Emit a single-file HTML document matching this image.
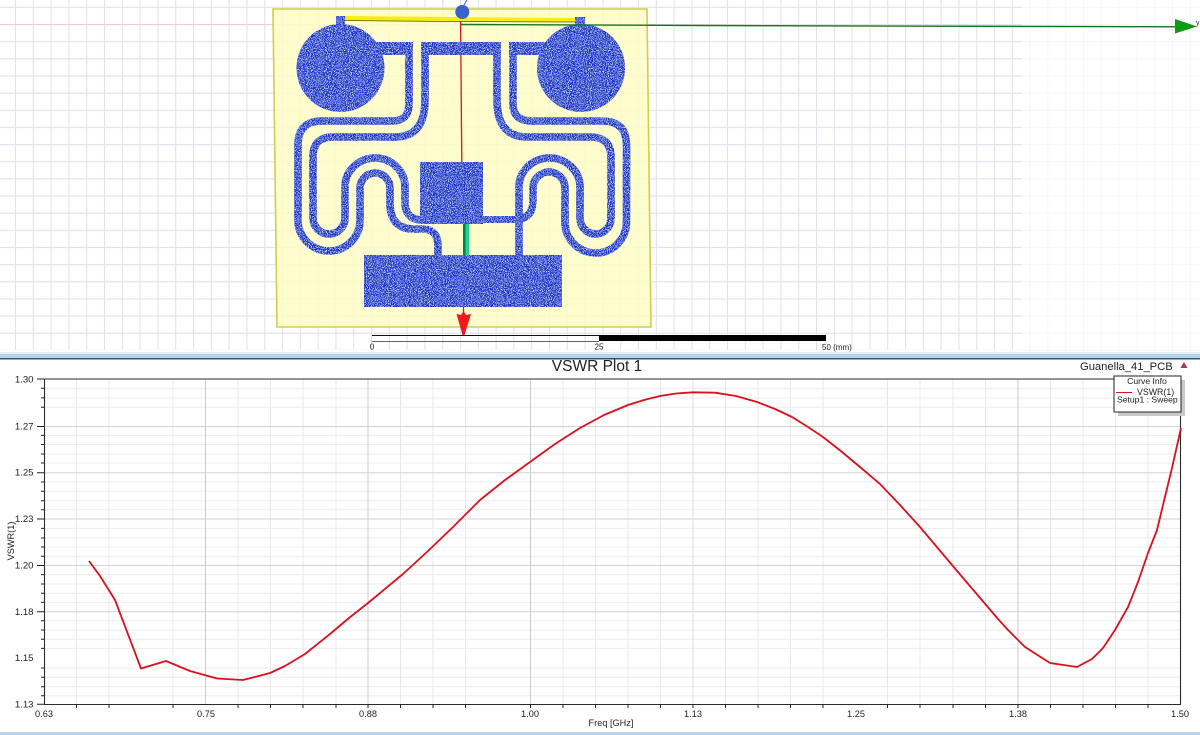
<!DOCTYPE html>
<html>
<head>
<meta charset="utf-8">
<title>VSWR Plot 1</title>
<style>
html,body{margin:0;padding:0;background:#fff;width:1200px;height:735px;overflow:hidden}
svg{display:block}
text{font-family:"Liberation Sans",sans-serif;fill:#222}
</style>
</head>
<body>
<svg width="1200" height="735" viewBox="0 0 1200 735" xmlns="http://www.w3.org/2000/svg">
<defs>
<pattern id="grid" patternUnits="userSpaceOnUse" x="15" y="6.85" width="17.8" height="17.15">
<path d="M0.5 0V17.15M0 0.5H17.8" stroke="#e1e1eb" stroke-width="1.1" fill="none"/>
</pattern>
<pattern id="gridf" patternUnits="userSpaceOnUse" x="15" y="6.85" width="17.8" height="17.15">
<path d="M0.5 0V17.15M0 0.5H17.8" stroke="#f7f7fa" stroke-width="1" fill="none"/>
</pattern>
<filter id="mesh" x="0" y="0" width="100%" height="100%" filterUnits="userSpaceOnUse" primitiveUnits="userSpaceOnUse">
<feTurbulence type="fractalNoise" baseFrequency="1.05" numOctaves="2" seed="4" result="n"/>
<feColorMatrix in="n" type="matrix" values="0 0 0 0 0.55  0 0 0 0 0.68  0 0 0 0 0.93  9 0 0 0 -4.6" result="s"/>
<feComposite in="s" in2="SourceGraphic" operator="in" result="sp"/>
<feMerge><feMergeNode in="SourceGraphic"/><feMergeNode in="sp"/></feMerge>
</filter>
</defs>

<!-- 3D view background grid -->
<rect x="0" y="0" width="1200" height="352" fill="#fff"/>
<rect x="1022" y="0" width="178" height="352" fill="url(#gridf)"/>
<rect x="0" y="0" width="1022" height="350" fill="url(#grid)"/>
<path d="M0 24.5H273" stroke="#f2ccd4" stroke-width="1"/>

<!-- board -->
<polygon points="273,9 647,9 651,327 277,327" fill="#fdfdc6" fill-opacity="0.85" stroke="#cfcf4a" stroke-width="1.6"/>

<!-- red axis -->
<path d="M460.5 14L461.8 162" stroke="#e01818" stroke-width="1.3" fill="none"/>
<path d="M463.5 307V316" stroke="#e01818" stroke-width="1.3" fill="none"/>

<!-- yellow bar -->
<polygon points="345,16 450,17 575,18 575,22 450,21.5 345,20.5" fill="#f6ee10"/>
<path d="M345 20.5L450 21.5L575 22" stroke="#555510" stroke-width="0.8" fill="none"/>

<!-- feed strip -->
<rect x="463" y="224" width="2.5" height="31" fill="#0d7d45"/>
<rect x="465.5" y="224" width="3.5" height="31" fill="#20d48e"/>

<!-- mesh metal -->
<g filter="url(#mesh)" fill="#1f33c8" stroke="none">
<circle cx="340.5" cy="68" r="44"/>
<circle cx="581" cy="68" r="44"/>
<rect x="336" y="16" width="9" height="12"/>
<rect x="575" y="17" width="10" height="11"/>
<rect x="373" y="42" width="40" height="13"/>
<rect x="509" y="42" width="41" height="13"/>
<rect x="421" y="42" width="80" height="13"/>
<rect x="420" y="162" width="63" height="62"/>
<rect x="364" y="255" width="198" height="52"/>
<rect x="483" y="216" width="37" height="7"/>
<g fill="none" stroke="#1f33c8" stroke-width="7.6">
<path d="M409 50V104Q409 121 392 121H322Q298 121 298 145V220A31 31 0 0 0 360 220V188A15 15 0 0 1 390 188V205Q391 228 412 229H424Q438 230 438 246V256"/>
<path d="M425 50V100Q425 137 395 137H333Q313 137 313 157V218A16 16 0 0 0 345 218V187A30 29 0 0 1 405 187V205Q407 220 422 220"/>
<path d="M513 50V104Q513 121 532 121H602Q626.5 121 626.5 145V222A30.75 31 0 0 1 565 222V188A15.5 15.5 0 0 0 533 188V200Q533 218 518 219"/>
<path d="M497 50V100Q497 137 527 137H590Q611 137 611 157V218A15.5 16 0 0 1 580 218V187A30.5 29 0 0 0 519 187V256"/>
</g>
</g>

<!-- axes triad -->
<path d="M461 24.5L700 25.5L1176 26.8" stroke="#14751c" stroke-width="1.4" fill="none"/>
<polygon points="1175,19 1197,26.5 1175,33.5" fill="#0f9a14"/>
<text x="1196" y="25" font-size="7" fill="#333">y</text>
<path d="M464 5L467 0" stroke="#3b62cc" stroke-width="1"/>
<circle cx="462.3" cy="12" r="7" fill="#3a62cc"/>
<polygon points="456.5,314 461,315 463.5,311 466,315 471,314 464.5,335 462.5,335" fill="#f01818"/>

<!-- scale bar -->
<rect x="372" y="335" width="227" height="1" fill="#111"/>
<rect x="372" y="341" width="227" height="1" fill="#666"/>
<rect x="599" y="335" width="227" height="6" fill="#000"/>
<text x="372" y="349.5" font-size="8" text-anchor="middle">0</text>
<text x="599" y="349.5" font-size="8" text-anchor="middle">25</text>
<text x="822" y="350" font-size="8">50 (mm)</text>

<!-- separator -->
<rect x="0" y="352" width="1200" height="2" fill="#e6edf5"/>
<rect x="0" y="354" width="1200" height="4" fill="#b4d3ec"/>
<rect x="0" y="358" width="1200" height="1.5" fill="#2c5a60"/>
<rect x="0" y="359.5" width="1200" height="372.5" fill="#fff"/>
<rect x="0" y="732" width="1200" height="3" fill="#b9d1ec"/>

<!-- plot gridlines minor -->
<path d="M44 388.3H1181M44 397.9H1181M44 407.2H1181M44 435.4H1181M44 444.5H1181M44 454H1181M44 463H1181M44 482H1181M44 491.2H1181M44 500.7H1181M44 509.8H1181M44 528.4H1181M44 538H1181M44 547H1181M44 556.3H1181M44 574.6H1181M44 584H1181M44 593.2H1181M44 602.4H1181M44 620.8H1181M44 630H1181M44 639.2H1181M44 648.4H1181M44 668H1181M44 677.3H1181M44 686.7H1181M44 695.8H1181" stroke="#ececf0" stroke-width="1" fill="none"/>
<path d="M76.5 379V704M109 379V704M173 379V704M238 379V704M270.5 379V704M303 379V704M336 379V704M400.5 379V704M433 379V704M465.5 379V704M563 379V704M595.5 379V704M628 379V704M660.5 379V704M725.5 379V704M758 379V704M790.5 379V704M823 379V704M887.5 379V704M920 379V704M953 379V704M985.5 379V704M1050.5 379V704M1083 379V704M1115.5 379V704M1148 379V704" stroke="#e9e9ed" stroke-width="1" fill="none"/>
<!-- plot gridlines major -->
<path d="M44 426.5H1181M44 472.7H1181M44 519H1181M44 565.5H1181M44 611.7H1181" stroke="#d2d2d5" stroke-width="1" fill="none"/>
<path d="M205.5 379V704M368 379V704M530.5 379V704M1018 379V704" stroke="#cbcbce" stroke-width="1" fill="none"/>
<path d="M693 379V704" stroke="#dcdce0" stroke-width="1" fill="none"/>

<!-- axes -->
<path d="M44.5 379H1181M44.5 379V704.5M44 704.5H1181M1180.5 379V704.5" stroke="#2a2a2a" stroke-width="1.1" fill="none"/>
<!-- y ticks -->
<path d="M37 379H44M37 426.5H44M37 472.7H44M37 519H44M37 565.5H44M37 611.7H44M37 704.3H44" stroke="#222" stroke-width="1" fill="none"/>
<path d="M41 388.3H44M41 397.9H44M41 407.2H44M41 435.4H44M41 444.5H44M41 454H44M41 463H44M41 482H44M41 491.2H44M41 500.7H44M41 509.8H44M41 528.4H44M41 538H44M41 547H44M41 556.3H44M41 574.6H44M41 584H44M41 593.2H44M41 602.4H44M41 620.8H44M41 630H44M41 639.2H44M41 648.4H44M41 668H44M41 677.3H44M41 686.7H44M41 695.8H44" stroke="#222" stroke-width="1" fill="none"/>
<!-- x ticks -->
<path d="M76.5 704V708M109 704V708M173 704V708M238 704V708M270.5 704V708M303 704V708M336 704V708M368 704V708M400.5 704V708M433 704V708M465.5 704V708M530.5 704V708M563 704V708M595.5 704V708M628 704V708M660.5 704V708M693 704V708M725.5 704V708M758 704V708M790.5 704V708M823 704V708M887.5 704V708M920 704V708M953 704V708M985.5 704V708M1018 704V708M1050.5 704V708M1083 704V708M1115.5 704V708M1148 704V708" stroke="#222" stroke-width="1" fill="none"/>

<!-- curve -->
<polyline fill="none" stroke="#dc101c" stroke-width="1.8" stroke-linejoin="round" points="89,561 100,576 115,600 141,668.5 166,661 190,671 217,678.5 243,680 270,673 285,666 305,654 330,634 349,618 368,603 403,574 428,551 453,527 480,500 505,480 530,462 555,444 580,428 604,415 628,405 644,400 660,396 676,393.5 693,392.3 715,392.7 736,396 757,402 775,409 792,417 808,427 823,437 842,452 860,467 880,484 900,505 920,527 936,546 952,565 975,592 998,619 1008,630 1025,647 1050,663 1077,667 1092,659 1103,648 1115,630 1128,607 1138,582 1148,553 1157,530 1163,505 1172,468 1181,428"/>

<!-- y labels -->
<g font-size="9.6" text-anchor="end">
<text x="33.5" y="382.5">1.30</text>
<text x="33.5" y="429.5">1.27</text>
<text x="33.5" y="475.5">1.25</text>
<text x="33.5" y="522">1.23</text>
<text x="33.5" y="568.5">1.20</text>
<text x="33.5" y="615">1.18</text>
<text x="33.5" y="661">1.15</text>
<text x="33.5" y="707.5">1.13</text>
</g>
<!-- x labels -->
<g font-size="9.2" text-anchor="middle">
<text x="44" y="717">0.63</text>
<text x="206" y="717">0.75</text>
<text x="368" y="717">0.88</text>
<text x="530" y="717">1.00</text>
<text x="693" y="717">1.13</text>
<text x="856" y="717">1.25</text>
<text x="1018" y="717">1.38</text>
<text x="1180" y="717">1.50</text>
</g>
<text x="611" y="726" font-size="9.2" text-anchor="middle">Freq [GHz]</text>
<text transform="translate(14,541) rotate(-90)" font-size="9.2" text-anchor="middle">VSWR(1)</text>

<!-- title -->
<text x="597" y="371" font-size="15.5" text-anchor="middle">VSWR Plot 1</text>
<text x="1080" y="370" font-size="11.2">Guanella_41_PCB</text>
<polygon points="1184,362 1187.5,368 1180.5,368" fill="#a83a48"/>

<!-- legend -->
<rect x="1118" y="380" width="67" height="36" fill="#c8c8c8"/>
<rect x="1114" y="376" width="67" height="36" fill="#fff" stroke="#222" stroke-width="1"/>
<text x="1147" y="384" font-size="8.6" text-anchor="middle">Curve Info</text>
<path d="M1116 392.5H1132" stroke="#e0121c" stroke-width="1"/>
<text x="1137" y="395" font-size="8.8">VSWR(1)</text>
<text x="1117" y="402.5" font-size="8.6">Setup1 : Sweep</text>
</svg>
</body>
</html>
